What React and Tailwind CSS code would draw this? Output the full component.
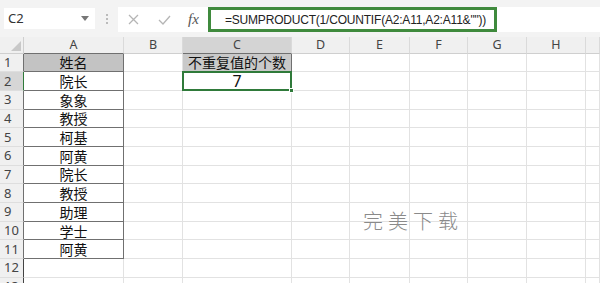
import React from 'react'

const COLS = ['A', 'B', 'C', 'D', 'E', 'F', 'G', 'H', '']
const NAMES = ['姓名', '院长', '象象', '教授', '柯基', '阿黄', '院长', '教授', '助理', '学士', '阿黄']
const DARK = 'border-[#707070]'
const LIGHT = 'border-[#e2e2e2]'

function Toolbar() {
  return (
    <div className="h-[37px] bg-[#f3f3f3] flex items-start pt-[8px] shrink-0">
      {/* name box */}
      <div className="ml-[4px] w-[91px] h-[21px] bg-white flex items-center justify-between pl-[4px] pr-[6px] text-[13px] text-[#333]">
        <span>C2</span>
        <svg width="8" height="5" viewBox="0 0 8 5"><path d="M0 0h8L4 5z" fill="#777" /></svg>
      </div>
      <div className="w-[23px] h-[21px] flex flex-col items-center justify-center gap-[2px]">
        <div className="w-[2px] h-[2px] bg-[#bbb]" />
        <div className="w-[2px] h-[2px] bg-[#bbb]" />
        <div className="w-[2px] h-[2px] bg-[#bbb]" />
      </div>
      {/* formula area */}
      <div className="flex-1 h-[25px] -mt-[1px] bg-white flex items-center">
        <div className="w-[90px] flex items-center">
          <svg className="ml-[10px]" width="11" height="11" viewBox="0 0 11 11">
            <path d="M1 1l9 9M10 1l-9 9" stroke="#b5b5b5" strokeWidth="1.3" />
          </svg>
          <svg className="ml-[19px]" width="13" height="10" viewBox="0 0 13 10">
            <path d="M1 5l4 4 7-8" stroke="#b5b5b5" strokeWidth="1.3" fill="none" />
          </svg>
          <span className="ml-[17px] text-[15px] italic text-[#555] font-['Liberation_Serif',serif] leading-none">fx</span>
        </div>
        <div className="w-[289px] h-[25px] border-[3px] border-[#3f8a3d] flex items-center pl-[14px] text-[12px] tracking-[-0.2px] text-[#222] whitespace-nowrap font-['Liberation_Sans',sans-serif]">
          =SUMPRODUCT(1/COUNTIF(A2:A11,A2:A11&amp;""))
        </div>
      </div>
    </div>
  )
}

function HeaderRow() {
  return (
    <div className="grid grid-cols-[24px_100px_59px_109px_58px_60px_58px_59px_59px_1fr] h-[16.5px] bg-[#f0f0f0] text-[12.5px] text-[#444] leading-none">
      <div className="relative border-r border-b border-[#cfcfcf]">
        <svg className="absolute right-[2px] bottom-[2px]" width="10" height="10" viewBox="0 0 10 10"><path d="M10 0v10H0z" fill="#c8c8c8" /></svg>
      </div>
      {COLS.map((c, i) => (
        <div
          key={i}
          className={
            'flex items-center justify-center border-r border-b border-r-[#dadada] ' +
            (c === 'C' ? 'bg-[#d4d4d4] ' : '') +
            (c === 'A' || c === 'C' ? 'border-b-[#707070]' : 'border-b-[#cfcfcf]')
          }
        >
          {c}
        </div>
      ))}
    </div>
  )
}

function Row({ n }) {
  const name = NAMES[n - 1]
  const inA = n <= 11
  return (
    <div className="grid grid-cols-[24px_100px_59px_109px_58px_60px_58px_59px_59px_1fr] h-[18.7px] text-[14px] leading-none">
      <div
        className={
          'flex items-center pl-[4px] text-[13px] text-[#444] border-b border-b-[#dedede] border-r ' +
          (n === 2 ? 'bg-[#d6d6d6] border-r-[#2f7a3a] ' : 'bg-[#f0f0f0] ') +
          (inA && n !== 2 ? DARK : '')
        }
      >
        {n}
      </div>
      <div
        className={
          'flex items-center justify-center text-[#111] border-r border-b font-["Noto_Sans_CJK_SC",sans-serif] ' +
          (inA ? DARK : LIGHT) +
          (n === 1 ? ' bg-[#c3c3c3]' : '')
        }
      >
        {name}
      </div>
      <div className={'border-b ' + LIGHT + ' border-r ' + (n <= 2 ? DARK : LIGHT)} />
      {n === 1 ? (
        <div className={'flex items-center justify-center bg-[#c9c9c9] text-[#111] border-r border-b font-["Noto_Sans_CJK_SC",sans-serif] ' + DARK}>
          不重复值的个数
        </div>
      ) : n === 2 ? (
        <div className={'relative flex items-center justify-center text-[16px] text-[#111] border-r border-b ' + DARK}>
          <div className="absolute -left-[1px] -top-[1px] -right-[1px] -bottom-[1px] border-2 border-[#2f7a3a]" />
          <div className="absolute -right-[3px] -bottom-[3px] w-[5px] h-[5px] bg-[#2f7a3a] border border-white" />
          7
        </div>
      ) : (
        <div className={'border-r border-b ' + LIGHT} />
      )}
      {[0, 1, 2, 3, 4, 5].map((i) => (
        <div key={i} className={'border-r border-b ' + LIGHT} />
      ))}
    </div>
  )
}

export default function App() {
  return (
    <div className="relative w-[600px] h-[283px] overflow-hidden bg-white font-['Noto_Sans','Noto_Sans_CJK_SC',sans-serif]">
      <Toolbar />
      <HeaderRow />
      {Array.from({ length: 13 }, (_, i) => (
        <Row key={i} n={i + 1} />
      ))}
      <div className="absolute left-[363px] top-[206px] text-[20px] tracking-[5px] text-[#8a8a8a] font-['Noto_Sans_CJK_SC',sans-serif] font-light">
        完美下载
      </div>
    </div>
  )
}
